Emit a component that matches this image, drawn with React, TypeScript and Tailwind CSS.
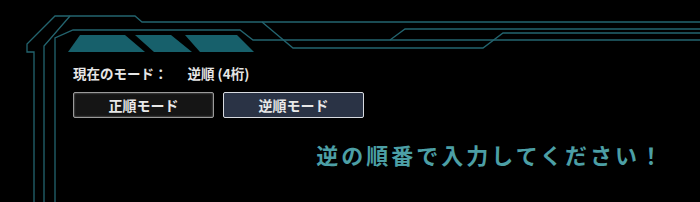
import React from 'react';

const LINE = '#23646f';
const TAB = '#17606b';

function FrameLines() {
    return (
        <svg
            className="pointer-events-none absolute inset-0"
            width="700"
            height="202"
            viewBox="0 0 700 202"
            fill="none"
        >
            <g stroke={LINE} strokeWidth="1.3">
                <path d="M34 202 V52 L27 52 V44 L55 16 H135 L142 22 H700" />
                <path d="M44 202 V46 L70 16" />
                <path d="M55 202 V38 L73 30 H240 L253 40 H700" />
                <path d="M262 22 L293 48 H483 L503 33 H700" />
                <path d="M390 40 L405 29 H700" />
            </g>
            <g fill={TAB}>
                <polygon points="80,35 125,35 145,52 68,52" />
                <polygon points="135,35 171,35 192,52 154,52" />
                <polygon points="185,35 237,35 254,52 200,52" />
            </g>
        </svg>
    );
}

function ModeButton({ label, active }: { label: string; active?: boolean }) {
    return (
        <button
            type="button"
            className={
                active
                    ? 'flex h-[26px] w-[141px] items-center justify-center rounded-[2px] border border-[#d8dbe0] bg-[#2a3345] text-[14px] font-bold text-[#e8e8e8]'
                    : 'flex h-[26px] w-[141px] items-center justify-center rounded-[2px] border border-[#9a9a9a] bg-[#151515] text-[14px] font-bold text-[#e8e8e8] shadow-[inset_0_0_2px_rgba(255,255,255,0.5)]'
            }
        >
            {label}
        </button>
    );
}

export default function App() {
    return (
        <div
            className="relative h-[202px] w-[700px] overflow-hidden bg-black"
            style={{ fontFamily: '"Noto Sans CJK JP", "Noto Sans", sans-serif' }}
        >
            <FrameLines />
            <div className="relative flex flex-col pl-[73px] pt-[63px]">
                <p className="text-[13.5px] font-bold leading-[20px] text-[#e6e6e6]">
                    現在のモード：<span className="pl-[20px]">逆順 (4桁)</span>
                </p>
                <div className="mt-[9px] flex gap-[9px]">
                    <ModeButton label="正順モード" />
                    <ModeButton label="逆順モード" active />
                </div>
                <div className="flex justify-end pr-[35px] pt-[22px]">
                    <p className="text-[22px] font-bold leading-[28px] tracking-[3px] text-[#4c9fa5]">
                        逆の順番で入力してください！
                    </p>
                </div>
            </div>
        </div>
    );
}
